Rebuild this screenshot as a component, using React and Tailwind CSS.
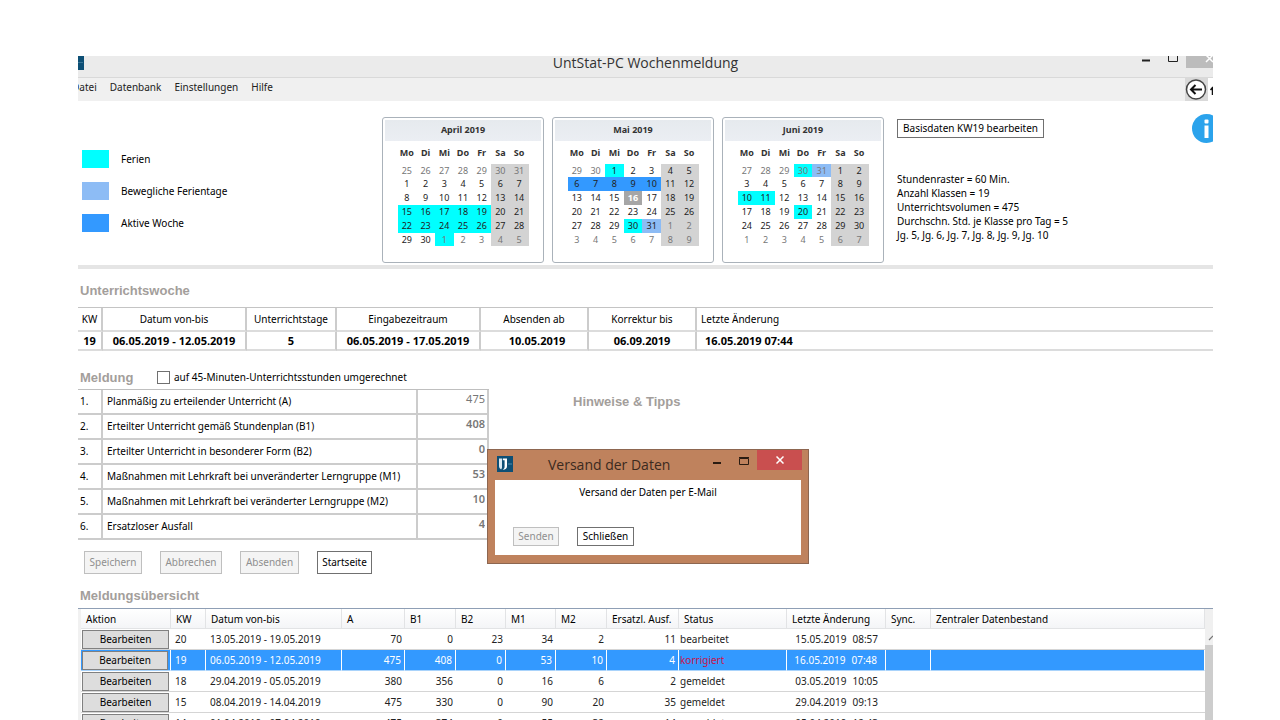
import React from 'react';

const HOLIDAY = 'bg-[#00ffff]';
const FLEX_DAY = 'bg-[#8dbcf5]';
const ACTIVE = 'bg-[#3399ff]';
const WEEKDAYS = ['Mo', 'Di', 'Mi', 'Do', 'Fr', 'Sa', 'So'];

const MONTHS = [
  {
    title: 'April 2019',
    lead: [25, 26, 27, 28, 29, 30, 31],
    days: 30,
    marks: {
      21: HOLIDAY, 22: HOLIDAY, 23: HOLIDAY, 24: HOLIDAY, 25: HOLIDAY,
      28: HOLIDAY, 29: HOLIDAY, 30: HOLIDAY, 31: HOLIDAY, 32: HOLIDAY, 37: HOLIDAY,
    },
  },
  {
    title: 'Mai 2019',
    lead: [29, 30],
    days: 31,
    marks: {
      2: HOLIDAY, 7: ACTIVE, 8: ACTIVE, 9: ACTIVE, 10: ACTIVE, 11: ACTIVE,
      17: 'bg-[#a6a6a6] text-white font-bold', 31: HOLIDAY, 32: FLEX_DAY,
    },
  },
  {
    title: 'Juni 2019',
    lead: [27, 28, 29, 30, 31],
    days: 30,
    marks: { 3: HOLIDAY, 4: FLEX_DAY, 14: HOLIDAY, 15: HOLIDAY, 24: HOLIDAY },
  },
];

const LEGEND = [
  [HOLIDAY, 'Ferien'],
  [FLEX_DAY, 'Bewegliche Ferientage'],
  [ACTIVE, 'Aktive Woche'],
];

const REPORT = [
  ['Planmäßig zu erteilender Unterricht (A)', '475'],
  ['Erteilter Unterricht gemäß Stundenplan (B1)', '408'],
  ['Erteilter Unterricht in besonderer Form (B2)', '0'],
  ['Maßnahmen mit Lehrkraft bei unveränderter Lerngruppe (M1)', '53'],
  ['Maßnahmen mit Lehrkraft bei veränderter Lerngruppe (M2)', '10'],
  ['Ersatzloser Ausfall', '4'],
];

const OVERVIEW_HEAD = [
  ['Aktion', 'w-[90px]'],
  ['KW', 'w-[35px]'],
  ['Datum von-bis', 'w-[136px]'],
  ['A', 'w-[63px]'],
  ['B1', 'w-[51px]'],
  ['B2', 'w-[50px]'],
  ['M1', 'w-[50px]'],
  ['M2', 'w-[51px]'],
  ['Ersatzl. Ausf.', 'w-[72px]'],
  ['Status', 'w-[108px]'],
  ['Letzte Änderung', 'w-[99px]'],
  ['Sync.', 'w-[45px]'],
  ['Zentraler Datenbestand', ''],
];

const OVERVIEW = [
  ['20', '13.05.2019 - 19.05.2019', '70', '0', '23', '34', '2', '11', 'bearbeitet', '15.05.2019', '08:57'],
  ['19', '06.05.2019 - 12.05.2019', '475', '408', '0', '53', '10', '4', 'korrigiert', '16.05.2019', '07:48'],
  ['18', '29.04.2019 - 05.05.2019', '380', '356', '0', '16', '6', '2', 'gemeldet', '03.05.2019', '10:05'],
  ['15', '08.04.2019 - 14.04.2019', '475', '330', '0', '90', '20', '35', 'gemeldet', '29.04.2019', '09:13'],
  ['14', '01.04.2019 - 07.04.2019', '475', '374', '0', '55', '32', '14', 'gemeldet', '05.04.2019', '12:43'],
];

function Calendar({ title, lead, days, marks }) {
  const cells = Array.from({ length: 42 }, (_, i) => {
    const offset = i - lead.length;
    if (offset < 0) return { day: lead[i], outside: true };
    if (offset < days) return { day: offset + 1, outside: false };
    return { day: offset - days + 1, outside: true };
  });
  const weeks = [0, 1, 2, 3, 4, 5].map((w) => cells.slice(w * 7, w * 7 + 7));
  return (
    <section className="h-[146px] w-[162px] rounded-[3px] border border-[#aab2ba] p-0.5 text-[9px] text-[#333]">
      <h2 className="h-[21px] bg-gradient-to-b from-[#e6eaee] to-[#ebeef3] text-center font-bold leading-[19px]">{title}</h2>
      <table className="mx-auto mt-[5px] w-[131px] table-fixed border-collapse text-center">
        <thead>
          <tr>
            {WEEKDAYS.map((d) => (
              <th key={d} className="h-[18px] p-0 align-top text-[9px] font-bold leading-[14px]">{d}</th>
            ))}
          </tr>
        </thead>
        <tbody>
          {weeks.map((week, w) => (
            <tr key={w} className={w === 0 || w === 5 ? 'h-[13px] leading-[13px]' : 'h-[14px] leading-[14px]'}>
              {week.map((cell, d) => {
                const mark = marks[w * 7 + d];
                const tone = cell.outside ? 'text-[#777]' : 'text-[#222]';
                const fill = mark || (d > 4 ? 'bg-[#d3d3d3]' : '');
                return (
                  <td key={d} className={`p-0 ${mark && mark.includes('text-white') ? '' : tone} ${fill}`}>
                    {cell.day}
                  </td>
                );
              })}
            </tr>
          ))}
        </tbody>
      </table>
    </section>
  );
}

function PlainButton({ children, disabled, className = '' }) {
  return (
    <button
      type="button"
      disabled={disabled}
      className={`whitespace-nowrap border border-[#707070] bg-white text-center text-black disabled:border-[#bfbfbf] disabled:bg-[#f4f4f4] disabled:text-[#8f8f8f] ${className}`}
    >
      {children}
    </button>
  );
}

function AppIcon() {
  return (
    <svg viewBox="0 0 16 16" className="size-4" aria-hidden="true">
      <rect width="16" height="16" fill="#0d4f75" />
      <path d="M2 2.500h3v8c0 1.300-.1 2-.9 3C2.700 12.700 2 11.500 2 9.800z" fill="#dbe9f1" />
      <path d="M5.800 2.500H10v7.700c0 2.300-1.300 3.500-4.300 3.500 1.500-.8 1.900-1.800 1.900-3.500V4.200H5.800z" fill="#fff" />
      <path d="M11 8h4" stroke="#4f8dad" />
    </svg>
  );
}

function TopArea() {
  return (
    <section className="flex h-[168px] border-b-4 border-[#e5e5e5]">
      <ul className="flex w-[304px] shrink-0 flex-col gap-[14px] pl-1 pt-[49px]">
        {LEGEND.map(([color, label]) => (
          <li key={label} className="flex h-[18px] items-center gap-3">
            <span className={`h-[18px] w-[27px] ${color}`} />
            <span>{label}</span>
          </li>
        ))}
      </ul>
      <div className="flex shrink-0 gap-2 pt-4">
        {MONTHS.map((m) => (
          <Calendar key={m.title} {...m} />
        ))}
      </div>
      <div className="ml-[13px] grow whitespace-nowrap pt-[18px]">
        <PlainButton className="h-[19px] w-[147px] leading-[17px]">Basisdaten KW19 bearbeiten</PlainButton>
        <div className="pt-[34px] leading-[14px]">
          <p>Stundenraster = 60 Min.</p>
          <p>Anzahl Klassen = 19</p>
          <p>Unterrichtsvolumen = 475</p>
          <p>Durchschn. Std. je Klasse pro Tag = 5</p>
          <p>Jg. 5, Jg. 6, Jg. 7, Jg. 8, Jg. 9, Jg. 10</p>
        </div>
      </div>
      <button type="button" aria-label="Info" className="-mr-2 mt-[13px] size-[29px] shrink-0">
        <svg viewBox="0 0 29 29" className="size-[29px]" aria-hidden="true">
          <circle cx="14.500" cy="14.500" r="14.500" fill="#2ba3ec" />
          <rect x="12.500" y="11.500" width="4" height="12.500" fill="#fff" />
          <rect x="12.500" y="5.500" width="4" height="4" rx="1" fill="#fff" />
        </svg>
      </button>
    </section>
  );
}

function WeekTable() {
  const th = 'h-6 border-b-2 border-r-2 border-b-[#dcdcdc] border-r-[#cccccc] p-0 font-normal';
  const td = "h-[19px] border-b-2 border-r-2 border-b-[#dcdcdc] border-r-[#cccccc] p-0 font-['Open_Sans',sans-serif] text-[11px] font-bold leading-[15px]";
  return (
    <table className="w-full table-fixed border-separate border-spacing-0 border-t border-[#c4c4c4] text-center">
      <thead>
        <tr>
          <th className={`w-[25px] ${th}`}>KW</th>
          <th className={`w-[144px] ${th}`}>Datum von-bis</th>
          <th className={`w-[90px] ${th}`}>Unterrichtstage</th>
          <th className={`w-[144px] ${th}`}>Eingabezeitraum</th>
          <th className={`w-[108px] ${th}`}>Absenden ab</th>
          <th className={`w-[108px] ${th}`}>Korrektur bis</th>
          <th className="h-6 border-b-2 border-[#dcdcdc] p-0 pl-1 text-left font-normal">Letzte Änderung</th>
        </tr>
      </thead>
      <tbody>
        <tr>
          <td className={td}>19</td>
          <td className={td}>06.05.2019 - 12.05.2019</td>
          <td className={td}>5</td>
          <td className={td}>06.05.2019 - 17.05.2019</td>
          <td className={`${td} pl-1.5`}>10.05.2019</td>
          <td className={td}>06.09.2019</td>
          <td className="h-[19px] border-b-2 border-[#dcdcdc] p-0 pl-2 text-left font-['Open_Sans',sans-serif] text-[11px] font-bold leading-[15px]">16.05.2019 07:44</td>
        </tr>
      </tbody>
    </table>
  );
}

function ReportForm() {
  return (
    <div className="w-[411px] shrink-0">
      <div className="flex h-[23px] items-center pl-0.5">
        <h2 className="w-[77px] font-['Liberation_Sans',sans-serif] text-[13px] font-bold text-[#a39e9b]">Meldung</h2>
        <label className="flex items-center gap-1 whitespace-nowrap">
          <input type="checkbox" className="size-[13px] appearance-none border border-[#707070] bg-white" />
          auf 45-Minuten-Unterrichtsstunden umgerechnet
        </label>
      </div>
      <table className="w-full table-fixed border-separate border-spacing-0 border-t border-[#bfbfbf]">
        <tbody>
          {REPORT.map(([label, value], i) => (
            <tr key={label}>
              <td className="h-[25px] w-[25px] border-b-2 border-r-2 border-[#cccccc] p-0 pl-0.5">{i + 1}.</td>
              <td className="h-[25px] w-[315px] whitespace-nowrap border-b-2 border-r-2 border-[#cccccc] p-0 pl-1">
                <label htmlFor={`report-${i}`}>{label}</label>
              </td>
              <td className="h-[25px] border-b-2 border-r-2 border-[#cccccc] p-0 align-top">
                <input
                  id={`report-${i}`}
                  readOnly
                  value={value}
                  className={`block h-[17px] w-full bg-white pr-0.5 text-right text-[11px] text-[#777] ${i === 0 ? '' : 'font-semibold'}`}
                />
              </td>
            </tr>
          ))}
        </tbody>
      </table>
      <div className="flex gap-[18px] pl-1.5 pt-[11px]">
        <PlainButton disabled className="h-[23px] w-[58px]">Speichern</PlainButton>
        <PlainButton disabled className="h-[23px] w-[62px]">Abbrechen</PlainButton>
        <PlainButton disabled className="h-[23px] w-[59px]">Absenden</PlainButton>
        <PlainButton className="h-[23px] w-[55px]">Startseite</PlainButton>
      </div>
    </div>
  );
}

function Overview() {
  return (
    <div className="flex border-t border-[#8f9fb5]">
      <div className="w-[3px] shrink-0 bg-[#f1f1f1]" />
      <table className="w-full table-fixed border-separate border-spacing-0 whitespace-nowrap">
        <thead>
          <tr>
            {OVERVIEW_HEAD.map(([label, width]) => (
              <th key={label} className={`h-[20px] border-b border-r border-[#e2e3e5] bg-gradient-to-b from-white to-[#f4f5f7] p-0 pl-[5px] text-left font-normal leading-[18px] ${width}`}>
                {label}
              </th>
            ))}
          </tr>
        </thead>
        <tbody>
          {OVERVIEW.map((row) => {
            const selected = row[0] === '19';
            const cell = `h-[21px] border-b p-0 leading-[18px] ${
              selected ? 'border-r border-b-[#a9d3fb] border-r-white bg-[#3399ff]' : 'border-[#d5d5d5]'
            }`;
            const tone = selected ? 'text-white' : 'text-[#222]';
            return (
              <tr key={row[0]} className={tone}>
                <td className={`${cell} pl-px pr-0.5`}>
                  <button type="button" className="block h-[19px] w-full border border-[#808080] bg-[#dddddd] text-center leading-[17px] text-black">
                    Bearbeiten
                  </button>
                </td>
                <td className={`${cell} pl-1`}>{row[0]}</td>
                <td className={`${cell} pl-1`}>{row[1]}</td>
                {row.slice(2, 8).map((value, i) => (
                  <td key={i} className={`${cell} pr-[3px] text-right`}>{value}</td>
                ))}
                <td className={`${cell} pl-px ${selected ? 'text-[#c8144b]' : ''}`}>{row[8]}</td>
                <td className={`${cell} pr-2 text-right`}>
                  <span className="mr-1.5">{row[9]}</span>
                  <span>{row[10]}</span>
                </td>
                <td className={cell} />
                <td className={cell} />
              </tr>
            );
          })}
        </tbody>
      </table>
      <div className="flex w-2 shrink-0 flex-col bg-[#f0f0f0]">
        <svg viewBox="0 0 8 36" className="h-9 w-2" aria-hidden="true">
          <path d="M4 31l4-4" fill="none" stroke="#777" strokeWidth="1.200" />
        </svg>
        <div className="grow bg-[#cdcdcd]" />
      </div>
    </div>
  );
}

function MailDialog() {
  return (
    <div
      role="dialog"
      aria-labelledby="dialog-title"
      className="absolute left-[409px] top-[393px] flex h-[115px] w-[322px] flex-col border border-[#8d6650] bg-[#bf825d] px-[7px] pb-2"
    >
      <header className="-mr-px flex h-[30px] shrink-0 items-start">
        <div className="pl-0.5 pt-1.5">
          <AppIcon />
        </div>
        <h2 id="dialog-title" className="ml-[35px] grow pt-1 font-['Open_Sans',sans-serif] text-[14px] leading-[22px] text-[#3b2a20]">Versand der Daten</h2>
        <button type="button" aria-label="Minimieren" className="flex h-[22px] w-[27px] items-center justify-center">
          <svg viewBox="0 0 8 8" className="size-2" aria-hidden="true">
            <path d="M0 6h8" stroke="#2a1c12" strokeWidth="2" />
          </svg>
        </button>
        <button type="button" aria-label="Maximieren" className="flex h-[22px] w-[27px] items-center justify-center">
          <svg viewBox="0 0 10 8" className="h-2 w-2.5" aria-hidden="true">
            <path d="M.5 1.500h9v6h-9zM0 .5h10" fill="none" stroke="#2a1c12" />
          </svg>
        </button>
        <button type="button" aria-label="Fenster schließen" className="flex h-5 w-[45px] items-center justify-center bg-[#c94f4f]">
          <svg viewBox="0 0 8 8" className="size-2" aria-hidden="true">
            <path d="M.5 .5l7 7M7.500 .5l-7 7" stroke="#fff" strokeWidth="1.500" />
          </svg>
        </button>
      </header>
      <div className="grow bg-white pt-1">
        <p className="text-center leading-[16px]">Versand der Daten per E-Mail</p>
        <div className="flex gap-[18px] pl-[18px] pt-[27px]">
          <PlainButton disabled className="h-[19px] w-[46px] leading-[17px]">Senden</PlainButton>
          <PlainButton className="h-[19px] w-[57px] leading-[17px]">Schließen</PlainButton>
        </div>
      </div>
    </div>
  );
}

export default function App() {
  const heading = "pl-0.5 font-['Liberation_Sans',sans-serif] text-[13px] font-bold text-[#a39e9b]";
  return (
    <div className="h-screen overflow-hidden bg-white pl-[78px] pr-[67px] pt-14 font-['Noto_Sans','Open_Sans',sans-serif] text-[10px] leading-[15px] text-black">
      <main className="relative h-full overflow-hidden">
        <header className="relative flex h-[22px] items-start justify-between border-b border-[#d9d9d9] bg-[#ebebeb]">
          <svg viewBox="0 0 6 14" className="h-3.5 w-1.5" aria-hidden="true">
            <rect width="6" height="14" fill="#0d4f75" />
            <path d="M0 6.500h5" stroke="#3a7596" />
          </svg>
          <h1 className="font-['Open_Sans',sans-serif] text-[14px] leading-[14px] text-[#333]">UntStat-PC Wochenmeldung</h1>
          <div className="absolute right-0 top-0 flex items-start">
            <svg viewBox="0 0 46 8" className="h-2 w-[46px]" aria-hidden="true">
              <path d="M2 4.500h8" stroke="#222" strokeWidth="2" />
              <path d="M28.500 0v5.500h9V0" fill="none" stroke="#222" />
            </svg>
            <svg viewBox="0 0 27 12" className="h-3 w-[27px]" aria-hidden="true">
              <rect width="27" height="12" fill="#bcbcbc" />
              <path d="M20 -1l7 7M27 -1l-7 7" stroke="#fff" strokeWidth="1.500" />
            </svg>
          </div>
          <span className="w-1.5" />
        </header>
        <nav className="flex h-[23px] items-center justify-between bg-[#f0f0f0] text-[#222]">
          <div className="-ml-[6px] flex gap-[13px] pb-1">
            <a href="#datei">Datei</a>
            <a href="#datenbank">Datenbank</a>
            <a href="#einstellungen">Einstellungen</a>
            <a href="#hilfe">Hilfe</a>
          </div>
          <svg viewBox="0 0 28 23" className="h-[23px] w-7" aria-hidden="true">
            <rect width="28" height="23" fill="#d9d9d9" />
            <rect x="23" y="0" width="5" height="23" fill="#fff" />
            <circle cx="11" cy="11.500" r="9.500" fill="#fff" stroke="#444" strokeWidth="1.500" />
            <path d="M17 11.500H6M10.500 7L6 11.500l4.500 4.500" fill="none" stroke="#111" strokeWidth="2" />
            <path d="M28 9l-2.500 3M27.500 10v7" fill="none" stroke="#111" strokeWidth="1.500" />
          </svg>
        </nav>
        <TopArea />
        <h2 className={`pb-[9px] pt-[14px] ${heading}`}>Unterrichtswoche</h2>
        <WeekTable />
        <div className="flex pt-[15px]">
          <ReportForm />
          <h2 className="ml-[84px] pt-7 font-['Liberation_Sans',sans-serif] text-[13px] font-bold text-[#a39e9b]">Hinweise &amp; Tipps</h2>
        </div>
        <h2 className={`pb-[5px] pt-[14px] ${heading}`}>Meldungsübersicht</h2>
        <Overview />
        <MailDialog />
      </main>
    </div>
  );
}
